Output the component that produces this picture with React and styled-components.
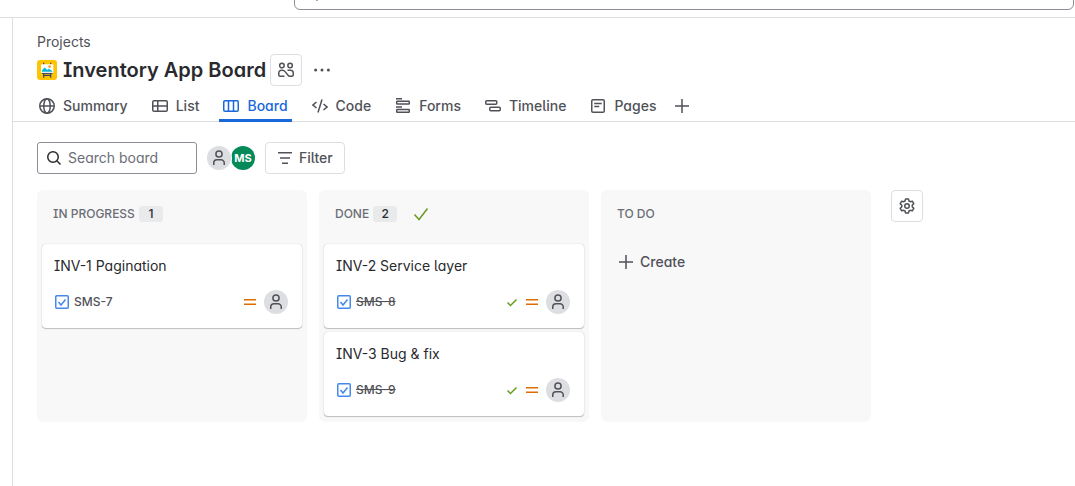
import React from "react";
import styled, { createGlobalStyle, css } from "styled-components";

const GlobalStyle = createGlobalStyle`
  *, *::before, *::after { box-sizing: border-box; }
  body {
    margin: 0;
    background: #fff;
    color: #292a2e;
    font-family: Inter, "Liberation Sans", sans-serif;
    font-size: 14px;
    line-height: 20px;
    font-feature-settings: "cv08", "cv11", "cv05";
  }
  button, input { font: inherit; font-feature-settings: inherit; color: inherit; }
  h1, h2, h3, p, ul { margin: 0; padding: 0; }
  svg { display: block; flex: none; }
`;

const Page = styled.div`
  display: flex;
  flex-direction: column;
  min-height: 100vh;
`;

const TopBar = styled.header`
  display: flex;
  align-items: flex-end;
  height: 18px;
  padding: 0 1px 7px 294px;
  overflow: hidden;
  border-bottom: 1px solid #dddee1;
`;

const GlobalSearch = styled.label`
  display: flex;
  flex: 1;
  align-items: center;
  gap: 8px;
  height: 32px;
  padding: 0 8px;
  border: 1px solid #8c8f97;
  border-radius: 6px;
  color: #505258;
`;

const BareInput = styled.input`
  flex: 1;
  min-width: 0;
  padding: 0;
  border: 0;
  outline: 0;
  background: transparent;
  &::placeholder { color: #6b6e76; opacity: 1; }
`;

const Main = styled.main`
  flex: 1;
  margin-left: 12px;
  border-left: 1px solid #dddee1;
`;

const Heading = styled.div`
  padding: 14px 24px 0;
`;

const Crumb = styled.a`
  display: block;
  width: max-content;
  color: #505258;
  text-decoration: none;
`;

const TitleRow = styled.div`
  display: flex;
  align-items: center;
  gap: 4px;
  margin-top: 2px;
`;

const TitleGroup = styled.div`
  display: flex;
  align-items: center;
  gap: 6px;
`;

const Title = styled.h1`
  font-size: 20px;
  line-height: 24px;
  font-weight: 600;
`;

const IconButton = styled.button`
  display: flex;
  align-items: center;
  justify-content: center;
  width: 32px;
  height: 32px;
  padding: 0;
  border: 1px solid ${(p) => (p.$plain ? "transparent" : "#dddee1")};
  border-radius: 4px;
  background: transparent;
  color: #505258;
`;

const Tabs = styled.nav`
  display: flex;
  gap: 16px;
  height: 36px;
  padding: 0 22px;
  border-bottom: 1px solid #dddee1;
`;

const Tab = styled.a`
  display: flex;
  align-items: center;
  gap: 8px;
  height: 36px;
  padding: 6px 4px 0;
  border-bottom: 3px solid transparent;
  color: #505258;
  font-weight: 500;
  text-decoration: none;
  ${(p) => p.$active && css`
    color: #1868db;
    border-color: #1868db;
  `}
`;

const AddTab = styled.button`
  display: flex;
  align-items: center;
  height: 36px;
  padding: 3px 0 0;
  border: 0;
  margin-left: -2px;
  background: transparent;
  color: #505258;
`;

const Toolbar = styled.div`
  display: flex;
  align-items: center;
  gap: 10px;
  padding: 20px 24px 16px;
`;

const SearchBox = styled.label`
  display: flex;
  align-items: center;
  gap: 6px;
  width: 160px;
  height: 32px;
  padding: 0 8px;
  border: 1px solid #8c8f97;
  border-radius: 3px;
`;

const Avatar = styled.span`
  display: flex;
  align-items: center;
  justify-content: center;
  width: 24px;
  height: 24px;
  border-radius: 50%;
  background: ${(p) => (p.$green ? "#048a58" : "#dddee1")};
  color: ${(p) => (p.$green ? "#fff" : "#505258")};
  font-size: 11px;
  font-weight: 700;
`;

const People = styled.div`
  display: flex;
  ${Avatar}:first-child {
    z-index: 1;
    box-shadow: 0 0 0 1px #fff;
  }
`;

const FilterButton = styled.button`
  display: flex;
  align-items: center;
  gap: 6px;
  height: 32px;
  padding: 0 11px;
  border: 1px solid #dddee1;
  border-radius: 4px;
  background: #fff;
  color: #505258;
  font-weight: 500;
`;

const Board = styled.div`
  display: flex;
  align-items: stretch;
  gap: 12px;
  padding: 0 24px 24px;
`;

const Column = styled.section`
  flex: 0 1 270px;
  min-height: 232px;
  padding: 0 5px 6px;
  border-radius: 6px;
  background: #f8f8f8;
`;

const ColumnHead = styled.div`
  display: flex;
  align-items: center;
  gap: 4px;
  height: 54px;
  padding: 0 11px 6px;
`;

const ColumnName = styled.h2`
  color: #6b6e76;
  font-size: 12px;
  line-height: 16px;
  font-weight: 500;
`;

const Count = styled.span`
  width: 24px;
  border-radius: 3px;
  background: #e9eaec;
  font-size: 12px;
  line-height: 16px;
  font-weight: 500;
  text-align: center;
`;

const DoneMark = styled.span`
  margin-left: 12px;
  color: #6a9a23;
`;

const Cards = styled.ul`
  display: flex;
  flex-direction: column;
  gap: 4px;
  list-style: none;
`;

const Card = styled.li`
  padding: 12px 14px 14px 12px;
  border-radius: 4px;
  background: #fff;
  box-shadow: 0 1px 1px rgba(30, 31, 33, 0.25), 0 0 1px rgba(30, 31, 33, 0.31);
`;

const CardTitle = styled.h3`
  font-size: 14px;
  line-height: 20px;
  font-weight: 400;
`;

const CardFoot = styled.div`
  display: flex;
  align-items: center;
  gap: 4px;
  margin-top: 14px;
`;

const Key = styled.a`
  flex: 1;
  color: #505258;
  font-size: 12px;
  line-height: 16px;
  font-weight: 500;
  text-decoration: ${(p) => (p.$done ? "line-through" : "none")};
`;

const Marks = styled.span`
  display: flex;
  align-items: center;
  gap: 4px;
  margin-right: 2px;
  color: #6a9a23;
`;

const CreateButton = styled.button`
  display: flex;
  align-items: center;
  gap: 6px;
  height: 36px;
  padding: 0 12px;
  border: 0;
  background: transparent;
  color: #505258;
  font-weight: 500;
`;

const BoardSettings = styled.div`
  margin-left: 8px;
`;

function Icon({ children }) {
  return (
    <svg width="16" height="16" viewBox="0 0 16 16" fill="none" stroke="currentColor" strokeWidth="1.5" aria-hidden="true">
      {children}
    </svg>
  );
}

const SearchIcon = () => (
  <Icon><circle cx="7" cy="7" r="5.25" /><path d="M10.8 10.8 14.5 14.5" /></Icon>
);
const PlusIcon = () => <Icon><path d="M8 1v14M1 8h14" /></Icon>;
const PersonIcon = () => (
  <Icon><circle cx="8" cy="4" r="3.1" /><path d="M2.75 15v-2A3.25 3.25 0 0 1 6 9.75h4A3.25 3.25 0 0 1 13.25 13v2" /></Icon>
);
const PeopleIcon = () => (
  <Icon>
    <circle cx="3.9" cy="3.6" r="2.25" /><circle cx="12.1" cy="3.6" r="2.25" />
    <path d="M6.5 14.25H2.25a1.5 1.5 0 0 1-1.5-1.5V11a2.75 2.75 0 0 1 2.75-2.75h1c1.2 0 1.9.5 2.6 1.4l2.7 3.3c.7.9 1.3 1.3 2.2 1.3h1.75a1.5 1.5 0 0 0 1.5-1.5V11a2.75 2.75 0 0 0-2.75-2.75H9.5" />
  </Icon>
);
const DotsIcon = () => (
  <svg width="16" height="16" viewBox="0 0 16 16" fill="currentColor" aria-hidden="true">
    <circle cx="1.6" cy="8" r="1.5" /><circle cx="8" cy="8" r="1.5" /><circle cx="14.4" cy="8" r="1.5" />
  </svg>
);
const GlobeIcon = () => (
  <Icon><circle cx="8" cy="8" r="7.25" /><ellipse cx="8" cy="8" rx="3.25" ry="7.25" /><path d="M1 8h14" /></Icon>
);
const ListIcon = () => (
  <Icon><rect x="0.75" y="2.75" width="14.5" height="10.5" rx="1.25" /><path d="M1 8h14M5.75 3v10" /></Icon>
);
const BoardIcon = () => (
  <Icon><rect x="0.75" y="2.75" width="14.5" height="10.5" rx="1.25" /><path d="M5.5 3v10M10.5 3v10" /></Icon>
);
const CodeIcon = () => (
  <Icon><path d="M4.5 4 1 7l3.5 3M11.5 6 15 9l-3.5 3M10 1.5 6 14.5" /></Icon>
);
const FormsIcon = () => (
  <Icon><path d="M1 .75h6M1 9h6" /><rect x="1.75" y="3.25" width="12.5" height="2.75" rx=".5" /><rect x="1.75" y="11.5" width="12.5" height="2.75" rx=".5" /></Icon>
);
const TimelineIcon = () => (
  <Icon><rect x=".75" y="2.75" width="11" height="3.5" rx="1" /><rect x="4.75" y="9.25" width="10.5" height="3.5" rx="1" /></Icon>
);
const PagesIcon = () => (
  <Icon><rect x="1.75" y="1.75" width="12.5" height="12.5" rx="1.25" /><path d="M4.25 5.5h7.5M4.25 8.5h5" /></Icon>
);
const FilterIcon = () => <Icon><path d="M1 2.75h14M3 8h10M5 13.25h6" /></Icon>;
const CheckIcon = () => <Icon><path d="M1.5 8.5 6 13.5 14.5 2.5" /></Icon>;
const SmallCheckIcon = () => <Icon><path d="m3.5 8.5 3 3 6-6" /></Icon>;
const GearIcon = () => (
  <Icon>
    <circle cx="8" cy="8" r="2.25" />
    <path d="M6.6.9h2.8l.6 2.1 1.2.7 2.1-.5 1.5 2.4-1.6 1.6v1.6l1.6 1.6-1.5 2.4-2.1-.5-1.2.7-.6 2.1H6.6L6 13l-1.2-.7-2.1.5-1.5-2.4 1.6-1.6V7.2L1.2 5.6l1.5-2.4 2.1.5L6 3z" strokeLinejoin="round" />
  </Icon>
);
const TaskIcon = () => (
  <svg width="16" height="16" viewBox="0 0 16 16" fill="none" stroke="#4688ec" strokeWidth="1.5" aria-hidden="true">
    <rect x="1.75" y="1.75" width="12.5" height="12.5" rx="1" /><path d="m4.5 8 2.5 3 4.5-5.5" />
  </svg>
);
const MediumIcon = () => (
  <svg width="16" height="16" viewBox="0 0 16 16" fill="none" stroke="#e06c00" strokeWidth="1.5" aria-hidden="true">
    <path d="M2 5.75h12M2 10.25h12" />
  </svg>
);
const ProjectIcon = () => (
  <svg width="20" height="20" viewBox="0 0 20 20" aria-hidden="true">
    <rect width="20" height="20" rx="3" fill="#ffc400" />
    <path d="M6.7 2.7v2M13.7 2.7v2M6.7 13v4.7M13.7 13v4.7M6.7 15.3h7" stroke="#344563" strokeWidth="1.2" />
    <rect x="4" y="4.2" width="12.4" height="8.8" rx=".8" fill="#fff" />
    <path d="M5 11.8v-1.6l2.7-2.7 2.5 2.6 1.6-1.3 3.5 2.2v.8z" fill="#00b8d9" />
    <path d="M5 13.4h10.4" stroke="#344563" strokeWidth="1" />
    <circle cx="12.6" cy="6.6" r="1.3" fill="#ff991f" />
  </svg>
);

const tabs = [
  ["Summary", GlobeIcon],
  ["List", ListIcon],
  ["Board", BoardIcon],
  ["Code", CodeIcon],
  ["Forms", FormsIcon],
  ["Timeline", TimelineIcon],
  ["Pages", PagesIcon],
];

const columns = [
  { name: "IN PROGRESS", cards: [{ title: "INV-1 Pagination", id: "SMS-7" }] },
  {
    name: "DONE",
    done: true,
    cards: [
      { title: "INV-2 Service layer", id: "SMS-8" },
      { title: "INV-3 Bug & fix", id: "SMS-9" },
    ],
  },
  { name: "TO DO", cards: [] },
];

function IssueCard({ title, id, done }) {
  return (
    <Card>
      <CardTitle>{title}</CardTitle>
      <CardFoot>
        <TaskIcon />
        <Key href="#issue" $done={done}>{id}</Key>
        <Marks>
          {done && <SmallCheckIcon />}
          <MediumIcon />
        </Marks>
        <Avatar><PersonIcon /></Avatar>
      </CardFoot>
    </Card>
  );
}

export default function App() {
  return (
    <Page>
      <GlobalStyle />
      <TopBar>
        <GlobalSearch>
          <SearchIcon />
          <BareInput type="search" aria-label="Search" />
        </GlobalSearch>
      </TopBar>
      <Main>
        <Heading>
          <Crumb href="#projects">Projects</Crumb>
          <TitleRow>
            <TitleGroup>
              <ProjectIcon />
              <Title>Inventory App Board</Title>
            </TitleGroup>
            <IconButton aria-label="Team"><PeopleIcon /></IconButton>
            <IconButton $plain aria-label="More actions"><DotsIcon /></IconButton>
          </TitleRow>
        </Heading>
        <Tabs>
          {tabs.map(([name, Glyph]) => (
            <Tab key={name} href={`#${name.toLowerCase()}`} $active={name === "Board"}>
              <Glyph />
              {name}
            </Tab>
          ))}
          <AddTab aria-label="Add view"><PlusIcon /></AddTab>
        </Tabs>
        <Toolbar>
          <SearchBox>
            <SearchIcon />
            <BareInput type="text" placeholder="Search board" aria-label="Search board" />
          </SearchBox>
          <People>
            <Avatar><PersonIcon /></Avatar>
            <Avatar $green>MS</Avatar>
          </People>
          <FilterButton><FilterIcon />Filter</FilterButton>
        </Toolbar>
        <Board>
          {columns.map((column) => (
            <Column key={column.name}>
              <ColumnHead>
                <ColumnName>{column.name}</ColumnName>
                {column.cards.length > 0 && <Count>{column.cards.length}</Count>}
                {column.done && <DoneMark><CheckIcon /></DoneMark>}
              </ColumnHead>
              {column.cards.length > 0 ? (
                <Cards>
                  {column.cards.map((card) => (
                    <IssueCard key={card.id} {...card} done={column.done} />
                  ))}
                </Cards>
              ) : (
                <CreateButton><PlusIcon />Create</CreateButton>
              )}
            </Column>
          ))}
          <BoardSettings>
            <IconButton aria-label="Board settings"><GearIcon /></IconButton>
          </BoardSettings>
        </Board>
      </Main>
    </Page>
  );
}
